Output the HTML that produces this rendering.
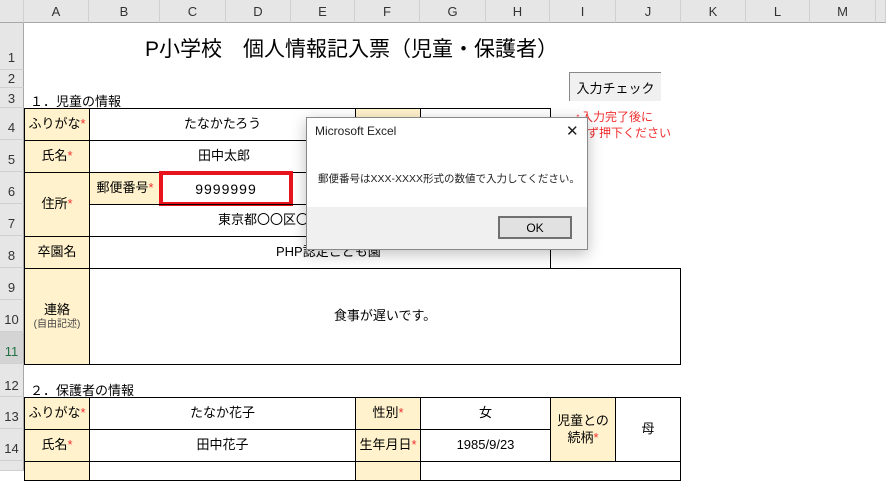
<!DOCTYPE html>
<html><head><meta charset="utf-8"><style>
body{margin:0;width:886px;height:467px;overflow:hidden;background:#fff;font-family:"Liberation Sans","Noto Sans CJK JP",sans-serif;position:relative}
div{position:absolute;box-sizing:border-box}
.ch{top:0;height:23px;background:#e6e6e6;border-right:1px solid #d0d0d0;border-bottom:1px solid #a8a8a8;font-size:13px;color:#333;text-align:center;line-height:23px}
.rh{left:0;width:24px;background:#e6e6e6;border-bottom:1px solid #d0d0d0;border-right:1px solid #a8a8a8;font-size:13px;color:#333;text-align:center}
.c{border:1px solid #000;font-size:13px;color:#000;display:flex;align-items:center;justify-content:center;text-align:center;line-height:1.3}
.b{background:#fff2cc}
.r{color:#f03030}
</style></head><body>
<div class="ch" style="left:0;width:24px"></div>
<div class="ch" style="left:24px;width:65px">A</div>
<div class="ch" style="left:89px;width:71px">B</div>
<div class="ch" style="left:160px;width:66px">C</div>
<div class="ch" style="left:226px;width:65px">D</div>
<div class="ch" style="left:291px;width:64px">E</div>
<div class="ch" style="left:355px;width:65px">F</div>
<div class="ch" style="left:420px;width:66px">G</div>
<div class="ch" style="left:486px;width:64px">H</div>
<div class="ch" style="left:550px;width:66px">I</div>
<div class="ch" style="left:616px;width:65px">J</div>
<div class="ch" style="left:681px;width:65px">K</div>
<div class="ch" style="left:746px;width:64px">L</div>
<div class="ch" style="left:810px;width:66px">M</div>
<div class="ch" style="left:876px;width:10px"></div>

<div class="rh" style="top:23px;height:47px;line-height:70px">1</div>
<div class="rh" style="top:70px;height:18px;line-height:18px">2</div>
<div class="rh" style="top:88px;height:20px;line-height:22px">3</div>
<div class="rh" style="top:108px;height:32px;line-height:40px">4</div>
<div class="rh" style="top:140px;height:32px;line-height:40px">5</div>
<div class="rh" style="top:172px;height:32px;line-height:40px">6</div>
<div class="rh" style="top:204px;height:32px;line-height:40px">7</div>
<div class="rh" style="top:236px;height:32px;line-height:40px">8</div>
<div class="rh" style="top:268px;height:32px;line-height:40px">9</div>
<div class="rh" style="top:300px;height:32px;line-height:40px">10</div>
<div class="rh" style="top:332px;height:32px;line-height:40px;background:#d4d4d4;color:#217346">11</div>
<div class="rh" style="top:364px;height:33px;line-height:44px">12</div>
<div class="rh" style="top:397px;height:32px;line-height:40px">13</div>
<div class="rh" style="top:429px;height:32px;line-height:40px">14</div>
<div class="rh" style="top:461px;height:10px"></div>

<div style="left:145px;top:33px;font-size:21px;white-space:nowrap">P小学校　個人情報記入票（児童・保護者）</div>
<div style="left:30px;top:91px;font-size:13px">１．児童の情報</div>

<div class="c b" style="left:24px;top:108px;width:66px;height:33px"><span>ふりがな<span class="r">*</span></span></div>
<div class="c" style="left:89px;top:108px;width:267px;height:33px">たなかたろう</div>
<div class="c b" style="left:355px;top:108px;width:66px;height:33px"></div>
<div class="c" style="left:420px;top:108px;width:131px;height:33px"></div>
<div class="c b" style="left:24px;top:140px;width:66px;height:33px"><span>氏名<span class="r">*</span></span></div>
<div class="c" style="left:89px;top:140px;width:462px;height:33px;justify-content:flex-start;padding-left:108px">田中太郎</div>
<div class="c b" style="left:24px;top:172px;width:66px;height:65px"><span>住所<span class="r">*</span></span></div>
<div class="c b" style="left:89px;top:172px;width:72px;height:33px"><span>郵便番号<span class="r">*</span></span></div>
<div class="c" style="left:160px;top:172px;width:391px;height:33px"></div>
<div style="left:159px;top:171px;width:134px;height:35px;border:4px solid #e8141c;font-size:14px;display:flex;align-items:center;justify-content:center;letter-spacing:1px">9999999</div>
<div class="c" style="left:89px;top:204px;width:462px;height:33px;justify-content:flex-start;padding-left:128px">東京都〇〇区〇</div>
<div class="c b" style="left:24px;top:236px;width:66px;height:33px">卒園名</div>
<div class="c" style="left:89px;top:236px;width:462px;height:33px;justify-content:flex-start;padding-left:186px">PHP認定こども園</div>
<div class="c b" style="left:24px;top:268px;width:66px;height:97px;flex-direction:column">連絡<span style="font-size:10px;color:#444">(自由記述)</span></div>
<div class="c" style="left:89px;top:268px;width:592px;height:97px">食事が遅いです。</div>

<div style="left:30px;top:380px;font-size:13px">２．保護者の情報</div>
<div class="c b" style="left:24px;top:397px;width:66px;height:33px"><span>ふりがな<span class="r">*</span></span></div>
<div class="c" style="left:89px;top:397px;width:267px;height:33px">たなか花子</div>
<div class="c b" style="left:355px;top:397px;width:66px;height:33px"><span>性別<span class="r">*</span></span></div>
<div class="c" style="left:420px;top:397px;width:131px;height:33px">女</div>
<div class="c b" style="left:550px;top:397px;width:66px;height:65px"><span>児童との<br>続柄<span class="r">*</span></span></div>
<div class="c" style="left:615px;top:397px;width:66px;height:65px">母</div>
<div class="c b" style="left:24px;top:429px;width:66px;height:33px"><span>氏名<span class="r">*</span></span></div>
<div class="c" style="left:89px;top:429px;width:267px;height:33px">田中花子</div>
<div class="c b" style="left:355px;top:429px;width:66px;height:33px"><span>生年月日<span class="r">*</span></span></div>
<div class="c" style="left:420px;top:429px;width:131px;height:33px">1985/9/23</div>
<div class="c b" style="left:24px;top:461px;width:66px;height:20px"></div>
<div class="c" style="left:89px;top:461px;width:267px;height:20px"></div>
<div class="c b" style="left:355px;top:461px;width:66px;height:20px"></div>
<div class="c" style="left:420px;top:461px;width:261px;height:20px"></div>

<div style="left:569px;top:72px;width:92px;height:29px;background:#f0f0f0;border-top:1px solid #888;border-left:1px solid #888;font-size:13px;display:flex;align-items:center;justify-content:center">入力チェック</div>
<div style="left:575px;top:109px;font-size:12px;color:#f03030;line-height:16px;white-space:nowrap">↑入力完了後に<br>必ず押下ください</div>

<div style="left:306px;top:117px;width:282px;height:133px;background:#fff;border:1px solid #888;box-shadow:0 4px 14px rgba(0,0,0,.25)">
<div style="left:8px;top:6px;font-size:12px;color:#222">Microsoft Excel</div>
<div style="left:259px;top:4px;font-size:15px;color:#222">✕</div>
<div style="left:11px;top:53px;font-size:10.5px;color:#222;white-space:nowrap">郵便番号はXXX-XXXX形式の数値で入力してください。</div>
<div style="left:0;top:89px;width:280px;height:42px;background:#f0f0f0"></div>
<div style="left:191px;top:98px;width:74px;height:23px;background:#e1e1e1;border:2px solid #707070;font-size:12px;display:flex;align-items:center;justify-content:center">OK</div>
</div>
</body></html>
